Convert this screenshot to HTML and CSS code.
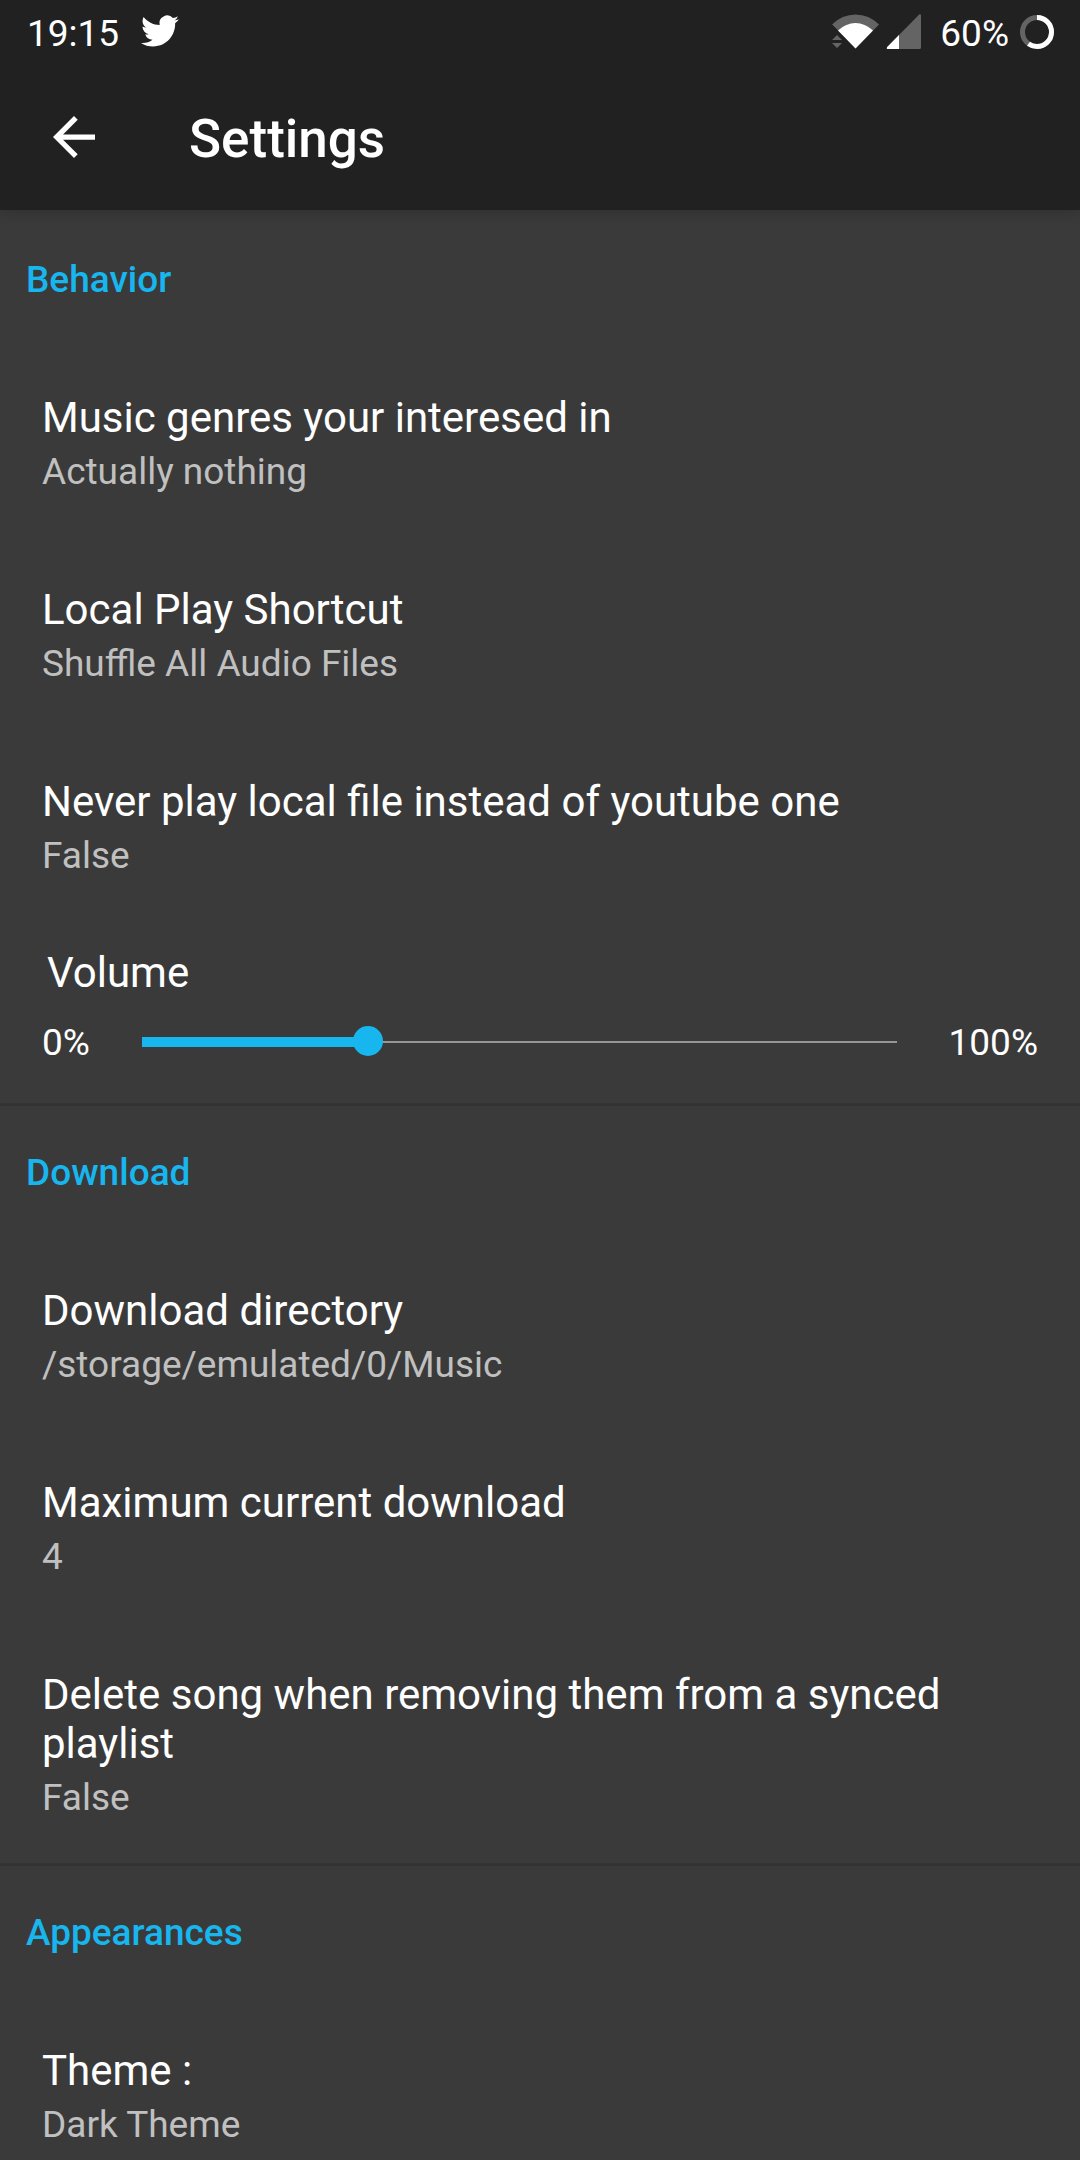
FILE: index.html
```html
<!DOCTYPE html>
<html lang="en">
<head>
<meta charset="utf-8">
<meta name="viewport" content="width=device-width, initial-scale=1">
<title>Settings</title>
<link rel="stylesheet" href="styles.css">
</head>
<body>
<header class="top">
  <div class="status">
    <span>19:15</span>
    <svg class="status-bird" width="38" height="38" viewBox="0 0 24 24" aria-hidden="true"><path fill="#fff" d="M23.953 4.57a10 10 0 01-2.825.775 4.958 4.958 0 002.163-2.723c-.951.555-2.005.959-3.127 1.184a4.92 4.92 0 00-8.384 4.482C7.69 8.095 4.067 6.13 1.64 3.162a4.822 4.822 0 00-.666 2.475c0 1.71.87 3.213 2.188 4.096a4.904 4.904 0 01-2.228-.616v.06a4.923 4.923 0 003.946 4.827 4.996 4.996 0 01-2.212.085 4.936 4.936 0 004.604 3.417 9.867 9.867 0 01-6.102 2.105c-.39 0-.779-.023-1.17-.067a13.995 13.995 0 007.557 2.209c9.053 0 13.998-7.496 13.998-13.985 0-.21 0-.42-.015-.63A9.935 9.935 0 0024 4.59z"/></svg>
    <div class="status-end">
      <svg width="90" height="36" viewBox="0 0 90 36" aria-hidden="true">
        <path fill="#646464" d="M0 10.500Q10 .5 23.500 .5T47 10.500L23.500 34.500Z"/>
        <path fill="#212121" d="M0 10.500L24 34.500L18 36H0Z"/>
        <path fill="#fff" d="M6 16.500Q14 9 23.500 9T41 16.500L23.500 34.500Z"/>
        <path fill="#646464" d="M0 26l5-5 5 5zM0 29h10l-5 5z"/>
        <path fill="#646464" d="M87.500 .3Q89 -.2 89 1.500V33.500Q89 35 87.500 35H56Q54 35 55.200 33Z"/>
        <path fill="#fff" d="M67 21V35H56Q54 35 55.200 33Z"/>
      </svg>
      <span class="battery-level">60%</span>
      <svg width="34" height="34" viewBox="0 0 34 34" aria-hidden="true">
        <circle cx="17" cy="17" r="14.500" fill="none" stroke="#646464" stroke-width="5"/>
        <circle cx="17" cy="17" r="14.500" fill="none" stroke="#fff" stroke-width="5" pathLength="100" stroke-dasharray="60 40" transform="rotate(-90 17 17)"/>
      </svg>
    </div>
  </div>
  <div class="appbar">
    <button class="back" type="button" aria-label="Back">
      <svg width="42" height="42" viewBox="4 4 16 16" aria-hidden="true"><path fill="#fff" d="M20 11H7.830l5.590-5.590L12 4l-8 8 8 8 1.410-1.410L7.830 13H20v-2z"/></svg>
    </button>
    <h1 class="title">Settings</h1>
  </div>
</header>
<main>
  <section class="group">
    <h2 class="group-name">Behavior</h2>
    <div class="list">
      <button class="item" type="button"><span class="name">Music genres your interesed in</span><span class="value">Actually nothing</span></button>
      <button class="item" type="button"><span class="name">Local Play Shortcut</span><span class="value">Shuffle All Audio Files</span></button>
      <button class="item" type="button"><span class="name">Never play local file instead of youtube one</span><span class="value">False</span></button>
    </div>
    <div class="volume">
      <label class="name volume-name" for="volume">Volume</label>
      <div class="volume-row">
        <span>0%</span>
        <input class="slider" id="volume" type="range" min="0" max="100" value="30">
        <span>100%</span>
      </div>
    </div>
  </section>
  <section class="group">
    <h2 class="group-name">Download</h2>
    <div class="list">
      <button class="item" type="button"><span class="name">Download directory</span><span class="value">/storage/emulated/0/Music</span></button>
      <button class="item" type="button"><span class="name">Maximum current download</span><span class="value">4</span></button>
      <button class="item" type="button"><span class="name">Delete song when removing them from a synced playlist</span><span class="value">False</span></button>
    </div>
  </section>
  <section class="group">
    <h2 class="group-name">Appearances</h2>
    <div class="list">
      <button class="item item-last" type="button"><span class="name">Theme :</span><span class="value">Dark Theme</span></button>
    </div>
  </section>
</main>
</body>
</html>
```

FILE: styles.css
```css
* {
  box-sizing: border-box;
}

body {
  margin: 0;
  background: #3a3a3a;
  color: #fff;
  font-family: Roboto, "Noto Sans", sans-serif;
  font-size: 37px;
  line-height: 43px;
}

h1,
h2 {
  margin: 0;
  font-weight: 500;
}

button {
  border: 0;
  background: none;
  color: inherit;
  font: inherit;
  text-align: left;
}

svg {
  display: block;
}

.top {
  position: relative;
  background: #212121;
  box-shadow: 0 2px 12px rgba(0, 0, 0, 0.2);
}

.status {
  display: flex;
  align-items: center;
  height: 66px;
  padding: 0 26px 0 27px;
}

.status-bird {
  margin: 0 0 4px 22px;
}

.status-end {
  display: flex;
  align-items: center;
  margin-left: auto;
}

.status-end svg {
  margin-bottom: 2px;
}

.battery-level {
  margin: 0 11px 0 18px;
}

.appbar {
  display: flex;
  align-items: center;
  height: 144px;
  padding: 2px 52px 0 32px;
}

.back {
  display: flex;
  padding: 21px;
  margin-bottom: 4px;
}

.title {
  margin-left: 73px;
  font-size: 53px;
  line-height: 62px;
}

.group + .group {
  border-top: 3px solid #333;
}

.group-name {
  padding: 48px 26px 46px;
  color: #17b6ee;
  font-size: 37px;
}

.group + .group .group-name {
  padding-top: 45px;
}

.list {
  display: flex;
  flex-direction: column;
  gap: 2px;
}

.item {
  display: flex;
  flex-direction: column;
  gap: 8px;
  padding: 46px 42px 44px;
}

.item-last {
  padding-bottom: 20px;
}

.name {
  font-size: 42px;
  line-height: 49px;
}

.value {
  color: #c0c0c0;
}

.volume {
  padding: 27px 42px 39px;
}

.volume-name {
  display: block;
  padding-left: 5px;
}

.volume-row {
  display: flex;
  align-items: center;
  gap: 37px;
  padding-top: 24px;
}

.slider {
  flex: 1;
  min-width: 0;
  height: 30px;
  margin: 0 0 4px;
  appearance: none;
  background: none;
}

/* The line starts and ends at the thumb's centre, 15px in from each side. */
.slider::-webkit-slider-runnable-track {
  height: 30px;
  background:
    linear-gradient(#17b6ee, #17b6ee) 15px 11px / calc((100% - 30px) * 0.3) 10px no-repeat,
    linear-gradient(#969696, #969696) 15px 15px / calc(100% - 30px) 2px no-repeat;
}

.slider::-webkit-slider-thumb {
  appearance: none;
  width: 30px;
  height: 30px;
  border-radius: 50%;
  background: #17b6ee;
}
```
